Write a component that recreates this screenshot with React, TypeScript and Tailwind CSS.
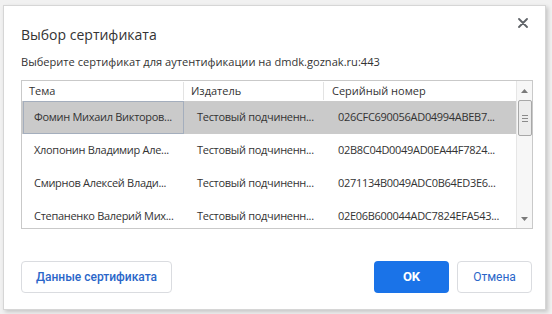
import React from 'react';

interface CertRow {
  subject: string;
  issuer: string;
  serial: string;
}

const rows: CertRow[] = [
  { subject: 'Фомин Михаил Викторов...', issuer: 'Тестовый подчиненн...', serial: '026CFC690056AD04994ABEB7...' },
  { subject: 'Хлопонин Владимир Але...', issuer: 'Тестовый подчиненн...', serial: '02B8C04D0049AD0EA44F7824...' },
  { subject: 'Смирнов Алексей Влади...', issuer: 'Тестовый подчиненн...', serial: '0271134B0049ADC0B64ED3E6...' },
  { subject: 'Степаненко Валерий Мих...', issuer: 'Тестовый подчиненн...', serial: '02E06B600044ADC7824EFA543...' },
];

const uiFont = { fontFamily: '"Open Sans", "Noto Sans", sans-serif' };
const btnFont = { fontFamily: 'Roboto, "Noto Sans", sans-serif' };

export default function App() {
  return (
    <div className="w-[552px] h-[314px] bg-[#f1f1f1] pt-[5px] pl-[3px] overflow-hidden">
      <div
        className="relative w-[543px] h-[305px] bg-white border border-[#d6d6d6] shadow-[2px_2px_4px_rgba(0,0,0,0.18)] pl-[17px] pr-[13px] flex flex-col text-[#333]"
        style={uiFont}
      >
        {/* Close */}
        <button className="absolute right-[17px] top-[12px] w-[10px] h-[10px] flex items-center justify-center">
          <svg width="10" height="10" viewBox="0 0 10 10">
            <path d="M1 1L9 9M9 1L1 9" stroke="#5f6368" strokeWidth="1.8" strokeLinecap="round" />
          </svg>
        </button>

        <h1 className="mt-[19px] text-[14px] leading-[20px] text-[#333]">Выбор сертификата</h1>
        <p className="mt-[9px] text-[11.1px] leading-[16px]">
          Выберите сертификат для аутентификации на dmdk.goznak.ru:443
        </p>

        {/* Certificate table */}
        <div className="mt-[10px] w-[512px] h-[149px] border border-[#c9c9c9] flex overflow-hidden text-[11px]">
          <div className="w-[494px] flex flex-col">
            <div className="h-[20px] flex items-center shrink-0">
              <div className="w-[162px] pl-[7px] border-r border-[#e3e3e3] h-[18px] leading-[18px]">Тема</div>
              <div className="w-[140px] pl-[7px] border-r border-[#e3e3e3] h-[18px] leading-[18px]">Издатель</div>
              <div className="flex-1 pl-[8px] h-[18px] leading-[18px]">Серийный номер</div>
            </div>
            {rows.map((r, i) => (
              <div
                key={r.serial}
                className={`h-[33px] shrink-0 flex items-center whitespace-nowrap tracking-[-0.3px] ${i === 0 ? 'bg-[#cacaca]' : ''}`}
              >
                <div
                  className={
                    i === 0
                      ? 'w-[161px] h-[33px] ml-[1px] flex items-center pl-[10px] overflow-hidden border border-[#a4aebd]'
                      : 'w-[162px] h-[33px] flex items-center pl-[12px] overflow-hidden'
                  }
                >
                  {r.subject}
                </div>
                <div className="w-[140px] pl-[13px] overflow-hidden">{r.issuer}</div>
                <div className="flex-1 pl-[14px] overflow-hidden">{r.serial}</div>
              </div>
            ))}
          </div>

          {/* Scrollbar */}
          <div className="w-[16px] bg-[#f7f7f7] border-l border-[#e6e6e6] flex flex-col items-center">
            <div className="h-[19px] flex items-center justify-center">
              <svg width="7" height="4" viewBox="0 0 7 4">
                <path d="M0 4L3.5 0L7 4Z" fill="#7a7a7a" />
              </svg>
            </div>
            <div className="w-[14px] h-[36px] bg-[#ececec] border border-[#a8a8a8] rounded-[2px] flex flex-col items-center justify-center gap-[2px]">
              <div className="w-[6px] h-[1px] bg-[#8a8a8a]" />
              <div className="w-[6px] h-[1px] bg-[#8a8a8a]" />
              <div className="w-[6px] h-[1px] bg-[#8a8a8a]" />
            </div>
            <div className="flex-1" />
            <div className="h-[14px] flex items-start justify-center pt-[3px]">
              <svg width="7" height="4" viewBox="0 0 7 4">
                <path d="M0 0L3.5 4L7 0Z" fill="#7a7a7a" />
              </svg>
            </div>
          </div>
        </div>

        {/* Buttons */}
        <div className="mt-[32px] flex items-center text-[12px] font-medium" style={btnFont}>
          <button className="w-[151px] h-[32px] border border-[#dadce0] rounded-[4px] text-[#2a66c9] bg-white">
            Данные сертификата
          </button>
          <div className="flex-1" />
          <button className="w-[75px] h-[32px] rounded-[4px] bg-[#1a73e8] text-white font-bold text-[13px]">OK</button>
          <button className="ml-[8px] w-[75px] h-[32px] border border-[#dadce0] rounded-[4px] text-[#2a66c9] bg-white font-normal">
            Отмена
          </button>
        </div>
      </div>
    </div>
  );
}
